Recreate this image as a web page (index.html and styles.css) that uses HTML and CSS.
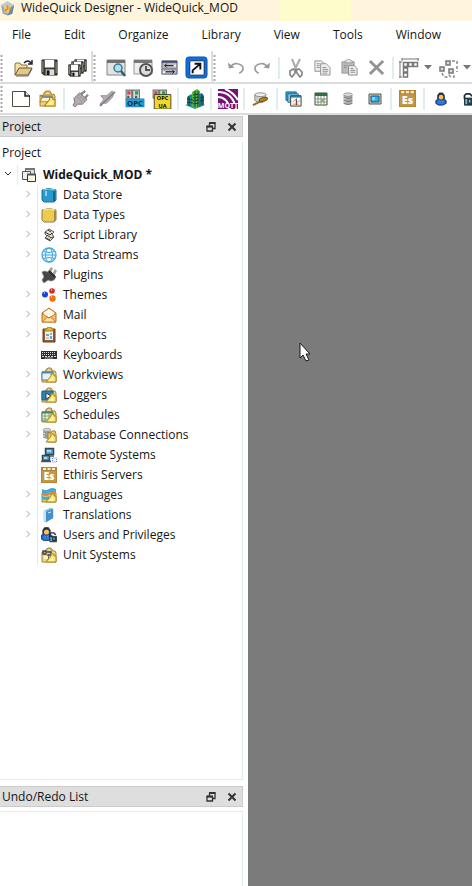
FILE: index.html
```html
<!DOCTYPE html>
<html lang="en">

<head>
    <meta charset="UTF-8" />
    <title>WideQuick Designer - WideQuick_MOD</title>
    <meta name="viewport" content="width=device-width, initial-scale=1" />
    <link rel="stylesheet" href="styles.css">
</head>

<body>
    <!-- Shared shapes -->
    <svg class="defs" aria-hidden="true">
        <symbol id="arrow" viewBox="0 0 10 14"><path d="M3.500 3l3 3-3 3" fill="none" stroke="#a6a6a6" /></symbol>
        <symbol id="float" viewBox="0 0 10 10"><path d="M3 1h6.500M3.500 1v3M9 1v5.500H7M1 4.500h5.500M1 4v5h5.500V4" fill="none" stroke="#333" stroke-width="1.300" /><path d="M3 1h6.500M.5 4.500H7" stroke="#333" stroke-width="2" /></symbol>
        <symbol id="close" viewBox="0 0 10 10"><path d="M1.500 1.500l7 7M8.500 1.500l-7 7" stroke="#333" stroke-width="2" /></symbol>
        <symbol id="folder" viewBox="0 0 16 16"><path d="M1 5h3l1-2.500 2-1.500h3l2 3h2l1 2v9H1z" fill="#eed77d" stroke="#a8842f" /><path d="M5 4l2-2h2l2 2z" fill="#fff" stroke="#a8842f" stroke-width=".7" /></symbol>
        <symbol id="ruler" viewBox="0 0 16 16"><path d="M5 15l5-6v-2h3v2h2v6z" fill="#ffe979" stroke="#a98320" /><path d="M9 13.500l3-3v3z" fill="#fffbd0" /></symbol>
        <symbol id="es" viewBox="0 0 16 16"><path d="M0 0h16v16H0z" fill="#b58532" /><path d="M1 4h14v11H1z" fill="#c3974a" /><path d="M2 1h3v2H2zM6.500 1h3v2h-3zM11 1h3v2h-3z" fill="#f9edd2" /><text x="8" y="13" text-anchor="middle" font-family="Open Sans, sans-serif" font-weight="800" font-size="10" fill="#fff">Es</text></symbol>
        <symbol id="user" viewBox="0 0 16 16"><path d="M4 4l2-3h4l2 3v4l2 2v3l-4 2H5l-3-2v-3l2-2z" fill="#1b55b8" stroke="#173055" stroke-width=".8" /><path d="M4.500 3l2-1.500h3L11 4v3H5z" fill="#2a2422" /><circle cx="8" cy="5.800" r="2.700" fill="#ffc347" /><path d="M6 9l2 2 2-2v2H6z" fill="#ff9c2a" /><path d="M3 11l3-1 2 2 3-2 2 2-3 2H5z" fill="#2c7bea" /></symbol>
        <symbol id="lock" viewBox="0 0 16 16"><path d="M4 8V4l2-2h4l2 2v1" fill="none" stroke="#1d3038" stroke-width="2" /><path d="M4 7h10v8H4z" fill="#23404a" stroke="#15252b" /><path d="M5 8h2v6H5z" fill="#82b8c3" /><path d="M10 9v3" stroke="#fff" /></symbol>
        <symbol id="db" viewBox="0 0 16 16"><path d="M3 3v10q5 3 10 0V3" fill="#aaa" /><ellipse cx="8" cy="3" rx="5" ry="2" fill="#ddd" stroke="#777" stroke-width=".8" /><path d="M3 6q5 3 10 0M3 9.500q5 3 10 0M3 13q5 3 10 0" fill="none" stroke="#777" /><path d="M4.500 7v1.500M4.500 10.500V12M4.500 4.800V5" stroke="#fff" /></symbol>
        <symbol id="grip" viewBox="0 0 3 26"><path d="M1.500 0v26" stroke="#aaa" stroke-width="2" stroke-dasharray="2 2" /></symbol>
        <symbol id="drop" viewBox="0 0 8 5"><path d="M0 0h8L4 4.500z" fill="#777" /></symbol>
        <symbol id="floppy" viewBox="0 0 18 18"><path d="M1 1h16v16H3l-2-2z" fill="#383832" stroke="#222" /><path d="M4 1h10v8H4z" fill="#fff" /><path d="M5 11h9v6H5z" fill="#ddd" /><path d="M6 12h3v5H6z" fill="#111" /><path d="M2 2v12M16 3v12" stroke="#a7a596" /></symbol>
        <symbol id="plug" viewBox="0 0 18 18"><path d="M9 5l5-4M13 9l4-4" stroke="#8d868d" stroke-width="2.500" /><path d="M2 9l6-6 8 7-5 5H6l-3 3-2-2 2-3z" fill="#b3acb3" stroke="#777077" /><path d="M5 7l6 6M7 5l6 6" stroke="#958e95" /></symbol>
    </svg>

    <header class="title-bar">
        <svg class="app-icon" viewBox="0 0 16 16"><path d="M1 5l7-4 7 4-2 9-5 2-5-2z" fill="#8eabc0" /><path d="M1 5l7-4 7 4-3 2H4z" fill="#b9ccda" /><path d="M4 6h8l-1 7H5z" fill="#f7ca7a" /><path d="M7 5h2v5H7zM5 9h2v3H5zM10 7h1v4h-1z" fill="#f18b17" /><path d="M8 16l5-2 2-9-3 2z" fill="#7087a1" /></svg>
        <h1>WideQuick Designer - WideQuick_MOD</h1>
    </header>

    <nav class="menu-bar">
        <button>File</button>
        <button>Edit</button>
        <button>Organize</button>
        <button>Library</button>
        <button>View</button>
        <button>Tools</button>
        <button>Window</button>
    </nav>

    <div class="toolbar-row main-tools">
        <div class="toolbar">
            <svg class="grip"><use href="#grip" /></svg>
            <button class="tool" aria-label="Open"><svg viewBox="0 0 20 20"><path d="M2 17V6l1-1h4l1 2h6v3" fill="#f7dfa2" stroke="#8b713c" /><path d="M2 17l4-7h13l-4 7z" fill="#e3c88b" stroke="#66583d" /><path d="M3 18h12l4-7" fill="none" stroke="#666" /><path d="M11 5q4-4 7 0M19 2v4h-4" fill="none" stroke="#222" stroke-width="1.500" /></svg></button>
            <button class="tool" aria-label="Save"><svg class="medium" viewBox="0 0 18 18"><use href="#floppy" /></svg></button>
            <button class="tool" aria-label="Save all"><svg viewBox="0 0 20 20"><use href="#floppy" x="7" y="1" width="13" height="13" /><use href="#floppy" x="4" y="3" width="13" height="13" /><use href="#floppy" x="1" y="6" width="13" height="13" /></svg></button>
        </div>
        <div class="toolbar">
            <svg class="grip"><use href="#grip" /></svg>
            <button class="tool" aria-label="Preview"><svg viewBox="0 0 20 20"><path d="M1 2h18v15H1z" fill="#e3e3df" stroke="#858585" /><path d="M1 2h18v3H1z" fill="#6e716f" /><circle cx="12" cy="10" r="4" fill="#a9e1f2" stroke="#42758e" stroke-width="1.500" /><path d="M15 13l4 5" stroke="#315b75" stroke-width="2.500" /></svg></button>
            <button class="tool" aria-label="Timed preview"><svg viewBox="0 0 20 20"><path d="M1 2h18v14H1z" fill="#eee" stroke="#999" /><path d="M1 2h18v3H1z" fill="#777" /><circle cx="13" cy="12" r="6" fill="#ddd" stroke="#555" stroke-width="2" /><path d="M13 8v4h4" fill="none" stroke="#555" stroke-width="2" /></svg></button>
            <button class="tool" aria-label="Transfer"><svg class="medium" viewBox="0 0 18 18"><path d="M1 2h16v14H1z" fill="#b9b9c3" stroke="#555965" /><path d="M1 2h16v2H1z" fill="#414c68" /><path d="M2 10h14v1H2z" fill="#5b6375" /><path d="M4 7h9M5 13.500h9M6 5L4 7l2 2M12 11.500l2 2-2 2" fill="none" stroke="#111" /><path d="M14 6h2v2h-2zM2 13h2v2H2z" fill="#fff" /></svg></button>
            <button class="tool" aria-label="Select references"><svg class="large" viewBox="0 0 24 24"><rect x="1" y="1" width="22" height="22" rx="3" fill="#126ddb" stroke="#0755b7" /><rect x="5" y="5" width="15" height="15" rx="1" fill="#fff" stroke="#102b4d" /><path d="M8 18v-3l7-6M10 8h6v6" fill="none" stroke="#111" stroke-width="2" /></svg></button>
        </div>
        <div class="toolbar">
            <svg class="grip"><use href="#grip" /></svg>
            <button class="tool" aria-label="Undo"><svg class="medium" viewBox="0 0 18 18"><path d="M1 4l1 6 6-1z" fill="#999" /><path d="M3 9q4-5 8-4 6 1 6 5 0 3-4 5" fill="none" stroke="#999" stroke-width="1.700" /></svg></button>
            <button class="tool" aria-label="Redo"><svg class="medium" viewBox="0 0 18 18"><path d="M17 4l-1 6-6-1z" fill="#999" /><path d="M15 9q-4-5-8-4-6 1-6 5 0 3 4 5" fill="none" stroke="#999" stroke-width="1.700" /></svg></button>
            <span class="separator"></span>
            <button class="tool" aria-label="Cut"><svg viewBox="0 0 20 20"><path d="M6 1l5 12M14 1L8 13" stroke="#aaa" stroke-width="2" /><path d="M9 12l-2-1-3 2v4l2 2 3-4zM10 12l3-1 3 3v3l-2 2-3-4z" fill="none" stroke="#888" stroke-width="1.700" /></svg></button>
            <button class="tool" aria-label="Copy"><svg class="medium" viewBox="0 0 18 18"><g fill="#eee" stroke="#929292"><path d="M1 2h7l3 3v8H1z" /><path d="M7 5h6l4 4v8H7z" /></g><path d="M3 5h3M3 7h3M3 9h3M9 9h4M9 11h6M9 13h6M9 15h5" stroke="#929292" /></svg></button>
            <button class="tool" aria-label="Paste"><svg class="medium" viewBox="0 0 18 18"><path d="M1 3h13v12H1z" fill="#bbb" stroke="#999" /><path d="M4 4V2h2l1-2h2l1 2h2v2z" fill="#eee" stroke="#999" /><path d="M8 7h6l3 3v7H8z" fill="#eee" stroke="#888" /><path d="M10 10h3M10 12h5M10 14h5M3 7h3M3 9h3" stroke="#888" /></svg></button>
            <button class="tool" aria-label="Delete"><svg class="medium" viewBox="0 0 18 18"><path d="M2 2l14 14M16 2L2 16" stroke="#929292" stroke-width="3" /></svg></button>
            <span class="separator"></span>
            <button class="tool split" aria-label="Align"><svg viewBox="0 0 20 20"><path d="M3 1h17M1 3v17M3 0v3M19 0v3M0 4h3M0 19h3" stroke="#777" /><g fill="#fff" stroke="#777" stroke-width="1.500"><path d="M4.500 4.500h4v4h-4zM9.500 4.500h4v4h-4zM14.500 4.500h4v4h-4zM4.500 10h4v4h-4zM4.500 15h4v4h-4z" /></g></svg><svg class="drop"><use href="#drop" /></svg></button>
            <button class="tool split" aria-label="Group"><svg viewBox="0 0 20 20"><g fill="#ddd" stroke="#777" stroke-width="1.500"><path d="M8 3h4v4H8zM2 9h4v4H2zM11 11h4v4h-4z" /></g><path d="M14 3h5v11M4 15l2 4h3l2-2 2 2h3v-4" fill="none" stroke="#888" stroke-width="1.500" stroke-dasharray="3 2" /></svg><svg class="drop"><use href="#drop" /></svg></button>
        </div>
    </div>

    <div class="toolbar-row">
        <div class="toolbar compact">
            <svg class="grip"><use href="#grip" /></svg>
            <button class="tool" aria-label="New"><svg viewBox="0 0 20 20"><path d="M1.500 2.500h13l4 4v11h-17z" fill="#fffefa" stroke="#4e4e43" /><path d="M14 2v5h5" fill="#ddd" stroke="#222" stroke-width="1.500" /></svg></button>
            <button class="tool" aria-label="Open folder"><svg class="medium" viewBox="0 0 16 16"><use href="#folder" /><path d="M2 5h11v2H2z" fill="#7c8a83" /><path d="M3 7h10l-2 4H1z" fill="#fff2ce" stroke="#b48d3b" /><use href="#ruler" /></svg></button>
            <span class="separator"></span>
            <button class="tool" aria-label="Connect"><svg class="medium"><use href="#plug" /></svg></button>
            <button class="tool" aria-label="Disconnect"><svg class="medium" viewBox="0 0 18 18"><path d="M2 6h6l6-5 2 2-2 5-6 6H5l-3 3-1-2 4-5z" fill="#b4adb4" stroke="#979097" /><path d="M1 17L17 2" stroke="#847d84" stroke-width="1.500" /></svg></button>
            <button class="tool" aria-label="OPC server"><svg viewBox="0 0 18 18"><path d="M1 1h5v8H1zM7 1h6v8H7z" fill="#ddd" stroke="#777" /><path d="M2 2h3v3H2z" fill="#e33a48" /><path d="M9 2h3v3H9z" fill="#24a44a" /><path d="M2 6h2v2H2zM9 6h2v2H9z" fill="#555" /><path d="M1 9h16v7H1z" fill="#20a3db" stroke="#1888b4" /><text x="9" y="15.500" text-anchor="middle" font-family="Open Sans, sans-serif" font-size="7" font-weight="700" fill="#07283b">OPC</text></svg></button>
            <button class="tool" aria-label="OPC UA server"><svg viewBox="0 0 18 18"><path d="M1 1h5v7H1zM7 1h6v7H7z" fill="#ddd" stroke="#777" /><path d="M2 2h3v3H2z" fill="#e33a48" /><path d="M9 2h3v3H9z" fill="#24a44a" /><path d="M2 5h15v13H2z" fill="#f0d62d" stroke="#222" stroke-width=".7" /><text x="9.500" y="10" text-anchor="middle" font-family="Open Sans, sans-serif" font-size="5" font-weight="700">OPC</text><text x="9.500" y="17" text-anchor="middle" font-family="Open Sans, sans-serif" font-size="5" font-weight="700">UA</text></svg></button>
            <span class="separator"></span>
            <button class="tool" aria-label="Building"><svg viewBox="0 0 20 20"><path d="M0 16l10 4 10-4-9-3z" fill="#1d9a9c" /><path d="M2 8l4-3 3 2v11l-7-2z" fill="#168d91" /><path d="M7 3l5-3 3 2v16l-5 1-3-2z" fill="#56b53a" /><path d="M14 5l3-1 2 3v9l-5 2z" fill="#117a9d" /><path d="M4 7v10M10 2v16M13 2v16M17 6v10" stroke="#123d4b" /><path d="M2 10l6 1M2 13l6 1M8 6l6-1M8 9l6-1M8 12l6-1M8 15l6-1M15 9l4-1M15 12l4-1" stroke="#173e3a" /></svg></button>
            <span class="separator"></span>
            <button class="tool" aria-label="MQTT"><svg viewBox="0 0 20 20"><path d="M0 0h20v20H0z" fill="#751276" /><path d="M0 3q15 0 18 17M0 8q9 0 12 12M7 0q8 3 13 11" fill="none" stroke="#fff" stroke-width="2" /><path d="M1 15h19v4H1z" fill="#751276" /><text x="10" y="19" text-anchor="middle" font-family="Open Sans, sans-serif" font-weight="700" font-size="7" fill="#fff">MQTT</text></svg></button>
            <span class="separator"></span>
            <button class="tool" aria-label="Recipes"><svg class="medium" viewBox="0 0 18 18"><path d="M3 5v6q6 5 11 0V5z" fill="#ccc" stroke="#888" /><ellipse cx="9" cy="5" rx="6" ry="2" fill="#eee" stroke="#888" /><path d="M1 16l8-4" stroke="#966d25" stroke-width="2" /><ellipse cx="12" cy="10" rx="4.500" ry="2" fill="#b58025" stroke="#6d521c" transform="rotate(-15 12 10)" /></svg></button>
            <span class="separator"></span>
            <button class="tool" aria-label="Workviews"><svg class="medium" viewBox="0 0 18 18"><path d="M1 2h11v9H1z" fill="#299bd2" stroke="#276c91" /><path d="M3 4h11v9H3z" fill="#82cce8" stroke="#276c91" /><path d="M6 6h11v11H6z" fill="#fff" stroke="#333" /><path d="M6 7h11" stroke="#28789d" stroke-width="2" /><path d="M8 13l3-3 2 3 3-2M8 15h7" fill="none" stroke="#db8d32" /><path d="M12 9v7" stroke="#333" /></svg></button>
            <button class="tool" aria-label="Schedules"><svg class="small" viewBox="0 0 14 14"><path d="M1 1h12v12H1z" fill="#fff" stroke="#444" /><path d="M1 1h12v3H1z" fill="#26763a" /><path d="M1 7h12M1 10h12M4 4v9M7 4v9M10 4v9" stroke="#789a79" /><path d="M7 7h3v3H7z" fill="#e98a4c" /></svg></button>
            <button class="tool" aria-label="Database"><svg class="small"><use href="#db" /></svg></button>
            <button class="tool" aria-label="Remote"><svg class="small" viewBox="0 0 14 14"><path d="M1 2h12v10H1z" fill="#d8cbb5" stroke="#555" /><path d="M3 4h8v6H3z" fill="#2cb0ee" stroke="#155a85" /><path d="M4 5h3v3H4z" fill="#82d7ff" /></svg></button>
            <span class="separator"></span>
            <button class="tool" aria-label="Ethiris"><svg class="medium"><use href="#es" /></svg></button>
            <span class="separator"></span>
            <button class="tool" aria-label="Users"><svg class="small"><use href="#user" /></svg></button>
            <button class="tool" aria-label="Privileges"><svg class="small"><use href="#lock" /></svg></button>
        </div>
    </div>

    <main>
        <aside>
            <section class="dock project">
                <header class="dock-header">
                    <h2>Project</h2>
                    <button aria-label="Float project"><svg><use href="#float" /></svg></button>
                    <button aria-label="Close project"><svg><use href="#close" /></svg></button>
                </header>
                <div class="dock-body">
                    <p class="tree-heading">Project</p>
                    <div class="root">
                        <button class="expander" aria-label="Collapse"><svg viewBox="0 0 10 14"><path d="M2 4l3 3 3-3" fill="none" stroke="#333" /></svg></button>
                        <svg class="icon" viewBox="0 0 16 16"><path d="M4.500 1.500h9v8h-9z" fill="#ddd" stroke="#666" /><path d="M4 2h10" stroke="#777" stroke-width="2" /><path d="M1.500 4.500h8v8h-8z" fill="#eee" stroke="#555" /><path d="M6.500 7.500h8v7h-8z" fill="#fff9df" stroke="#333" /><path d="M6 7.500h9" stroke="#555" stroke-width="2" /></svg>
                        <span>WideQuick_MOD *</span>
                    </div>
                    <ul class="tree">
                        <li><button class="expander" aria-label="Expand"><svg><use href="#arrow" /></svg></button><svg class="icon" viewBox="0 0 16 16"><path d="M1 3q7-3 14 0v10l-2 2H3l-2-2z" fill="#279bd0" stroke="#226b91" /><path d="M2 3q6-2 12 0" stroke="#9bcde0" fill="none" /><path d="M5 4v5" stroke="#fff" /><path d="M13 4v10" stroke="#17668e" stroke-width="2" /></svg><span>Data Store</span></li>
                        <li><button class="expander" aria-label="Expand"><svg><use href="#arrow" /></svg></button><svg class="icon" viewBox="0 0 16 16"><path d="M1 3q7-3 14 0v10l-2 2H3l-2-2z" fill="#eccb50" stroke="#8e7c4c" /><path d="M2 3q6-2 12 0" stroke="#fff0a5" fill="none" /><path d="M14 4v10" stroke="#a78c3c" stroke-width="2" /></svg><span>Data Types</span></li>
                        <li><button class="expander" aria-label="Expand"><svg><use href="#arrow" /></svg></button><svg class="icon" viewBox="0 0 16 16"><path d="M4 5l4-3 5 3-2 2 2 3-4 4-5-3 2-2-2-2z" fill="#e8e1cc" stroke="#555" /><path d="M4 5l5 3 2-2M6 8l4 3 2-1M7 3l3 2M5 11l4 2" fill="none" stroke="#333" /></svg><span>Script Library</span></li>
                        <li><button class="expander" aria-label="Expand"><svg><use href="#arrow" /></svg></button><svg class="icon" viewBox="0 0 16 16"><circle cx="8" cy="8" r="7" fill="#e9f8ff" stroke="#45a6dd" stroke-width="1.300" /><ellipse cx="8" cy="8" rx="3.500" ry="7" fill="none" stroke="#45a6dd" /><path d="M1 8h14M2.500 4.500q5.500 2 11 0M2.500 11.500q5.500-2 11 0" fill="none" stroke="#45a6dd" /></svg><span>Data Streams</span></li>
                        <li><span class="expander"></span><svg class="icon" viewBox="0 0 16 16"><path d="M7 4l3-4 2 1-2 5zM11 7l3-5 2 2-3 5z" fill="#aaa2a2" /><path d="M1 5l3-1 2 1 3-1 6 6-2 3-3 1-3-1-4 3-2-3 2-3z" fill="#494744" stroke="#777" stroke-width=".7" /><path d="M8 4l6 6" stroke="#302d2b" stroke-width="2" /></svg><span>Plugins</span></li>
                        <li><button class="expander" aria-label="Expand"><svg><use href="#arrow" /></svg></button><svg class="icon" viewBox="0 0 16 16"><circle cx="4" cy="7.500" r="3" fill="#1745dc" /><circle cx="11" cy="4" r="2.800" fill="#db272c" /><circle cx="11.500" cy="11.500" r="3.200" fill="#f07011" /><path d="M3 6h1M10 3h1M10 10h1" stroke="#fff" /></svg><span>Themes</span></li>
                        <li><button class="expander" aria-label="Expand"><svg><use href="#arrow" /></svg></button><svg class="icon" viewBox="0 0 16 16"><path d="M1 6l7-5 7 5v9H1z" fill="#f5bc64" stroke="#bd6f29" /><path d="M3 5.500L8 2l5 3.500V8l-5 3-5-3z" fill="#fffbe2" /><path d="M1 15l5.500-5L8 11l1.500-1 5.500 5z" fill="#ffe4a1" stroke="#c77b34" /><path d="M1 6.500l7 4.500 7-4.500" fill="none" stroke="#c77b34" /></svg><span>Mail</span></li>
                        <li><button class="expander" aria-label="Expand"><svg><use href="#arrow" /></svg></button><svg class="icon" viewBox="0 0 16 16"><path d="M2 2h12v13H2z" fill="#9a5a24" stroke="#6e3f20" /><path d="M4 4h8v9H4z" fill="#eef2f4" /><path d="M4 4V2h2l1-2h3l1 2h1v2z" fill="#ddbc29" stroke="#a7821b" /><path d="M5 7h3v2H5zM9 9h2v3H9z" fill="#5ca9dc" /><path d="M9 6h2v2H9z" fill="#e49758" /><path d="M5 11h3" stroke="#8aa8b8" /></svg><span>Reports</span></li>
                        <li><span class="expander"></span><svg class="icon" viewBox="0 0 16 16"><path d="M0 4h16v8H0z" fill="#2d2d2d" /><path d="M1 5.500h14M1 7.500h14" stroke="#ddd" stroke-dasharray="1 1" /><path d="M1 9.500h14" stroke="#ddd" stroke-dasharray="2 1" /><path d="M4 11h8" stroke="#aaa" /></svg><span>Keyboards</span></li>
                        <li><button class="expander" aria-label="Expand"><svg><use href="#arrow" /></svg></button><svg class="icon" viewBox="0 0 16 16"><use href="#folder" /><path d="M1 5h11v8H1z" fill="#e9f1f3" stroke="#597a88" /><path d="M1 5.500h11" stroke="#428ebb" stroke-width="2" /><use href="#ruler" /></svg><span>Workviews</span></li>
                        <li><button class="expander" aria-label="Expand"><svg><use href="#arrow" /></svg></button><svg class="icon" viewBox="0 0 16 16"><use href="#folder" /><path d="M1 4h11v9H1z" fill="#2b84b7" stroke="#275d7f" /><path d="M5 6l5 3-5 3z" fill="#fff" stroke="#274455" /><use href="#ruler" /></svg><span>Loggers</span></li>
                        <li><button class="expander" aria-label="Expand"><svg><use href="#arrow" /></svg></button><svg class="icon" viewBox="0 0 16 16"><use href="#folder" /><path d="M1 5h11v9H1z" fill="#edf4e8" stroke="#667a65" /><path d="M1 5.500h11" stroke="#458562" stroke-width="2" /><path d="M1 9h11M1 12h11M4 6v8M8 6v8" stroke="#75a57b" /><use href="#ruler" /></svg><span>Schedules</span></li>
                        <li><button class="expander" aria-label="Expand"><svg><use href="#arrow" /></svg></button><svg class="icon" viewBox="0 0 16 16"><use href="#db" x="0" y="0" width="12" height="13" /><path d="M7 6h3l1-2h3l1 3v8H7z" fill="#e9ce69" stroke="#a8842f" /><use href="#ruler" /></svg><span>Database Connections</span></li>
                        <li><span class="expander"></span><svg class="icon" viewBox="0 0 16 16"><path d="M4.500 1.500h8v6h-8zM1.500 8.500h7v5h-7z" fill="#53a9d5" stroke="#39444c" stroke-width="1.500" /><path d="M6 3h4v2H6zM3 10h3v2H3z" fill="#a0daf0" /><path d="M8 9h5M0 14.500h10" stroke="#555" stroke-width="1.500" /><path d="M11.500 11v4h4v-4z" fill="none" stroke="#557dc3" stroke-dasharray="1 1" /></svg><span>Remote Systems</span></li>
                        <li><span class="expander"></span><svg class="icon"><use href="#es" /></svg><span>Ethiris Servers</span></li>
                        <li><button class="expander" aria-label="Expand"><svg><use href="#arrow" /></svg></button><svg class="icon" viewBox="0 0 16 16"><path d="M1 6h14v9H1z" fill="#e7ca61" stroke="#a8842f" /><path d="M1 2q4 2 7 0t7 0v4q-4-2-7 0t-7 0z" fill="#3eaadd" /><path d="M1 6q4 2 7 0t7-1v2q-4-1-7 1t-7 0z" fill="#e6843c" /><path d="M1 9q4 2 7 0v3q-3 2-7 0z" fill="#3eaadd" /><use href="#ruler" /></svg><span>Languages</span></li>
                        <li><button class="expander" aria-label="Expand"><svg><use href="#arrow" /></svg></button><svg class="icon" viewBox="0 0 16 16"><path d="M3 4l7-3 2 1v9l-7 4-2-1z" fill="#6eaddc" stroke="#b3c5d2" /><path d="M5 5l7-3v9l-7 4z" fill="#3d91d1" /><path d="M4 4v10" stroke="#e5f2fa" stroke-width="1.500" /><path d="M7 6l3-1" stroke="#d7eefb" /></svg><span>Translations</span></li>
                        <li><button class="expander" aria-label="Expand"><svg><use href="#arrow" /></svg></button><svg class="icon" viewBox="0 0 16 16"><use href="#user" x="-2" y="-1" width="15" height="16" /><use href="#lock" x="6" y="4" width="11" height="12" /></svg><span>Users and Privileges</span></li>
                        <li><span class="expander"></span><svg class="icon" viewBox="0 0 16 16"><use href="#folder" /><path d="M2 4h3v3H2zM6 5h4v3H7v4h3" fill="none" stroke="#333d62" stroke-width="1.300" /><path d="M3 9h4v3H3z" fill="#fff5b6" /><use href="#ruler" /></svg><span>Unit Systems</span></li>
                    </ul>
                </div>
            </section>
            <section class="dock history">
                <header class="dock-header">
                    <h2>Undo/Redo List</h2>
                    <button aria-label="Float undo list"><svg><use href="#float" /></svg></button>
                    <button aria-label="Close undo list"><svg><use href="#close" /></svg></button>
                </header>
                <div class="dock-body"></div>
            </section>
        </aside>
        <div class="workspace">
            <svg class="pointer" viewBox="0 0 12 20"><path d="M1 1v15l3-3 3 6 3-1-3-6h4z" fill="#fff" stroke="#171720" /></svg>
        </div>
    </main>
</body>

</html>
```

FILE: styles.css
```css
* {
    box-sizing: border-box;
}

body {
    display: flex;
    flex-direction: column;
    height: 100vh;
    margin: 0;
    overflow: hidden;
    font-family: "Open Sans", "Noto Sans", sans-serif;
    font-size: 12px;
    line-height: 20px;
    color: #151515;
    background-color: #fff;
}

h1,
h2,
p,
ul {
    margin: 0;
    padding: 0;
    font-size: 12px;
    font-weight: normal;
}

button {
    padding: 0;
    border: none;
    background: none;
    font: inherit;
    color: inherit;
}

svg {
    display: block;
    flex: none;
}

.defs {
    display: none;
}

.title-bar {
    display: flex;
    align-items: center;
    flex: none;
    gap: 6px;
    height: 21px;
    padding-bottom: 5px;
    background: linear-gradient(90deg, #fff4dc 280px, #fffccc 280px, #fffccc 351px, #fff4dc 351px);
}

.app-icon {
    width: 15px;
    height: 16px;
}

.menu-bar {
    display: flex;
    flex: none;
    gap: 1px;
    height: 30px;
    padding-bottom: 3px;
}

.menu-bar button {
    padding: 0 16px;
}

.menu-bar button:first-child {
    padding-left: 12px;
}

.toolbar-row {
    display: flex;
    flex: none;
    height: 31px;
    overflow: hidden;
    border-bottom: 2px solid #dcdcdc;
}

.main-tools {
    height: 33px;
}

.toolbar {
    display: flex;
    align-items: center;
    flex: none;
    padding-right: 1px;
    border-right: 2px solid #dedede;
}

.main-tools .toolbar {
    padding-top: 2px;
}

.toolbar:last-child {
    border-right: none;
}

.grip {
    width: 3px;
    height: 26px;
    margin-right: 6px;
}

.compact .grip {
    margin-right: 4px;
}

.tool {
    display: flex;
    align-items: center;
    justify-content: center;
    flex: none;
    width: 27px;
    height: 29px;
}

.tool svg {
    width: 20px;
    height: 20px;
}

.tool .small {
    width: 14px;
    height: 14px;
}

.tool .medium {
    width: 17px;
    height: 17px;
}

.tool .large {
    width: 23px;
    height: 23px;
}

.split {
    gap: 5px;
    width: 39px;
}

.tool .drop {
    width: 8px;
    height: 5px;
}

.separator {
    flex: none;
    width: 2px;
    height: 22px;
    margin: 0 2px;
    background-color: #e1eeee;
}

main {
    display: flex;
    flex: 1;
    min-height: 0;
}

aside {
    display: flex;
    flex-direction: column;
    flex: none;
    width: 248px;
    padding: 1px 5px 0 0;
}

.dock {
    display: flex;
    flex-direction: column;
}

.project {
    flex: 1;
    min-height: 0;
}

.history {
    height: 100px;
}

.dock-header {
    display: flex;
    align-items: center;
    flex: none;
    height: 21px;
    padding: 1px 5px 0 2px;
    gap: 11px;
    background-color: #dedede;
    border: 1px solid #cbcbcb;
    border-left: none;
}

.dock-header h2 {
    flex: 1;
}

.dock-header svg {
    width: 10px;
    height: 10px;
}

.dock-body {
    flex: 1;
    margin-top: 4px;
    border: 1px solid #e1ecec;
    border-left: none;
}

.project .dock-body {
    margin-bottom: 6px;
    border-top: none;
    overflow: hidden;
}

.history .dock-body {
    border-bottom: none;
}

.tree-heading {
    height: 23px;
    padding: 2px;
}

.root,
.tree li {
    display: flex;
    align-items: center;
    height: 20px;
}

.root {
    height: 21px;
    padding-left: 3px;
    font-weight: bold;
}

.tree {
    list-style: none;
}

.tree li {
    padding-left: 23px;
}

.expander {
    flex: none;
    width: 15px;
    height: 20px;
    border-right: 1px solid #e1ecec;
}

.expander svg {
    width: 10px;
    height: 14px;
}

.icon {
    width: 16px;
    height: 16px;
    margin: 0 6px 0 3px;
}

.workspace {
    position: relative;
    flex: 1;
    background-color: #7b7b7b;
}

.pointer {
    position: absolute;
    top: 227px;
    left: 51px;
    width: 12px;
    height: 20px;
}
```
